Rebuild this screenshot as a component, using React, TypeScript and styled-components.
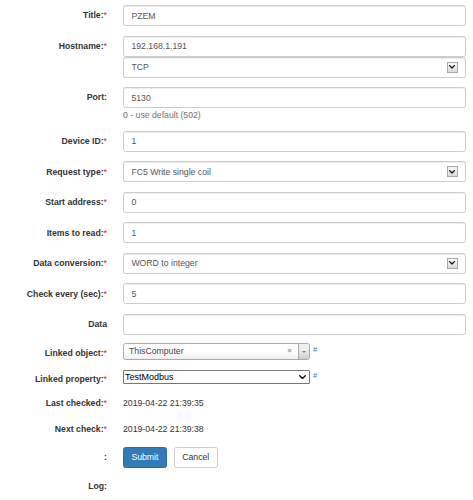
import styled, { createGlobalStyle } from "styled-components"

const GlobalStyle = createGlobalStyle`
  html, body {
    margin: 0;
    padding: 0;
    background: #fff;
  }
  body {
    font-family: "Liberation Sans", Arial, Helvetica, sans-serif;
    font-size: 8.7px;
    line-height: 12.4px;
    color: #333;
  }
`

const Form = styled.form`
  padding: 5px 7px 0 0;
`

const Group = styled.div<{ $mb?: number }>`
  display: grid;
  grid-template-columns: 107px 1fr;
  column-gap: 16px;
  margin-bottom: ${(p) => (p.$mb ?? 9.5)}px;
`

const Label = styled.label`
  font-weight: bold;
  text-align: right;
  white-space: nowrap;
  padding-top: 4.3px;
  line-height: 12.4px;
`

const Req = styled.span`
  color: #e8161b;
  font-weight: normal;
`

const Stack = styled.div`
  display: flex;
  flex-direction: column;
  min-width: 0;
`

const Input = styled.input`
  box-sizing: border-box;
  width: 100%;
  height: 21px;
  margin: 0;
  padding: 0 7.4px;
  border: 1px solid #ccc;
  border-radius: 2.5px;
  box-shadow: inset 0 1px 1px rgba(0, 0, 0, 0.075);
  background: #fff;
  font: inherit;
  color: #555;
  outline: none;
`

const SelectBox = styled.div`
  box-sizing: border-box;
  height: 21px;
  display: flex;
  align-items: center;
  padding: 0 7.4px;
  border: 1px solid #ccc;
  border-radius: 2.5px;
  box-shadow: inset 0 1px 1px rgba(0, 0, 0, 0.075);
  background: #fff;
  color: #555;
`

const SelectText = styled.span`
  flex: 1;
`

const ArrowBox = styled.span`
  box-sizing: border-box;
  width: 11px;
  height: 11px;
  display: flex;
  align-items: center;
  justify-content: center;
  border: 1px solid #a9a9a9;
  background: linear-gradient(to bottom, #f6f6f6, #dadada);
`

const Help = styled.div`
  margin-top: 0.8px;
  color: #737373;
  line-height: 12.4px;
`

const Inline = styled.div`
  display: flex;
  align-items: center;
`

const Select2 = styled.div`
  box-sizing: border-box;
  width: 187px;
  height: 17px;
  display: flex;
  align-items: center;
  border: 1px solid #aaa;
  border-radius: 2.5px;
  background: linear-gradient(to top, #eee 0%, #fff 50%);
  color: #444;
`

const Select2Text = styled.span`
  flex: 1;
  padding-left: 5px;
`

const Clear = styled.span`
  color: #999;
  font-weight: bold;
  font-size: 8px;
  margin-right: 6px;
`

const Select2Arrow = styled.span`
  width: 10px;
  height: 100%;
  display: flex;
  align-items: center;
  justify-content: center;
  border-left: 1px solid #aaa;
  border-radius: 0 2.5px 2.5px 0;
  background: linear-gradient(to top, #ccc 0%, #eee 60%);

  &::after {
    content: "";
    border-style: solid;
    border-color: #888 transparent transparent transparent;
    border-width: 2.5px 2px 0 2px;
  }
`

const NativeSelect = styled.div`
  box-sizing: border-box;
  width: 187px;
  height: 14px;
  display: flex;
  align-items: center;
  padding: 0 3px 0 1px;
  border: 1px solid #767676;
  border-radius: 1px;
  background: #fff;
  color: #000;
  font-size: 9px;
`

const Hash = styled.a`
  color: #337ab7;
  text-decoration: none;
  font-size: 7.5px;
  margin-left: 3px;
  margin-top: -2px;
`

const Static = styled.div`
  padding-top: 4.3px;
  line-height: 12.4px;
  color: #333;
`

const Buttons = styled.div`
  display: flex;
  gap: 7px;
`

const Button = styled.button<{ $primary?: boolean }>`
  box-sizing: border-box;
  height: 21px;
  margin: 0;
  padding: 0 7.4px;
  font: inherit;
  border-radius: 2.5px;
  border: 1px solid ${(p) => (p.$primary ? "#2e6da4" : "#ccc")};
  background: ${(p) => (p.$primary ? "#337ab7" : "#fff")};
  color: ${(p) => (p.$primary ? "#fff" : "#333")};
  cursor: pointer;
`

const Chevron = ({ size = 7, stroke = "#111", width = 1.6 }: { size?: number; stroke?: string; width?: number }) => (
  <svg width={size} height={size * 0.6} viewBox="0 0 10 6">
    <path d="M1 1 L5 5 L9 1" fill="none" stroke={stroke} strokeWidth={width * 1.4} strokeLinecap="round" strokeLinejoin="round" />
  </svg>
)

const Dropdown = ({ value }: { value: string }) => (
  <SelectBox>
    <SelectText>{value}</SelectText>
    <ArrowBox>
      <Chevron size={6} width={1.5} />
    </ArrowBox>
  </SelectBox>
)

const Field = ({ label, req, children, mb }: { label: string; req?: boolean; children?: React.ReactNode; mb?: number }) => (
  <Group $mb={mb}>
    <Label>
      {label}
      {req && <Req>*</Req>}
    </Label>
    <Stack>{children}</Stack>
  </Group>
)

export default function App() {
  return (
    <>
      <GlobalStyle />
      <Form onSubmit={(e) => e.preventDefault()}>
        <Field label="Title:" req>
          <Input defaultValue="PZEM" />
        </Field>
        <Field label="Hostname:" req>
          <Input defaultValue="192.168.1.191" />
          <Dropdown value="TCP" />
        </Field>
        <Field label="Port:">
          <Input defaultValue="5130" />
          <Help>0 - use default (502)</Help>
        </Field>
        <Field label="Device ID:" req>
          <Input defaultValue="1" />
        </Field>
        <Field label="Request type:" req>
          <Dropdown value="FC5 Write single coil" />
        </Field>
        <Field label="Start address:" req>
          <Input defaultValue="0" />
        </Field>
        <Field label="Items to read:" req>
          <Input defaultValue="1" />
        </Field>
        <Field label="Data conversion:" req>
          <Dropdown value="WORD to integer" />
        </Field>
        <Field label="Check every (sec):" req>
          <Input defaultValue="5" />
        </Field>
        <Field label="Data" mb={8.3}>
          <Input defaultValue="" />
        </Field>
        <Group $mb={9}>
          <Label style={{ paddingTop: 3.5 }}>
            Linked object:<Req>*</Req>
          </Label>
          <Inline>
            <Select2>
              <Select2Text>ThisComputer</Select2Text>
              <Clear>×</Clear>
              <Select2Arrow />
            </Select2>
            <Hash href="#">#</Hash>
          </Inline>
        </Group>
        <Group $mb={7.5}>
          <Label style={{ paddingTop: 3.8 }}>
            Linked property:<Req>*</Req>
          </Label>
          <Inline>
            <NativeSelect>
              <SelectText>TestModbus</SelectText>
              <Chevron size={7} width={1.4} />
            </NativeSelect>
            <Hash href="#">#</Hash>
          </Inline>
        </Group>
        <Field label="Last checked:" req mb={9.5}>
          <Static>2019-04-22 21:39:35</Static>
        </Field>
        <Field label="Next check:" req mb={11}>
          <Static>2019-04-22 21:39:38</Static>
        </Field>
        <Field label=":" mb={8.5}>
          <Buttons>
            <Button type="submit" $primary>Submit</Button>
            <Button type="button">Cancel</Button>
          </Buttons>
        </Field>
        <Field label="Log:">
          <Static />
        </Field>
      </Form>
    </>
  )
}
